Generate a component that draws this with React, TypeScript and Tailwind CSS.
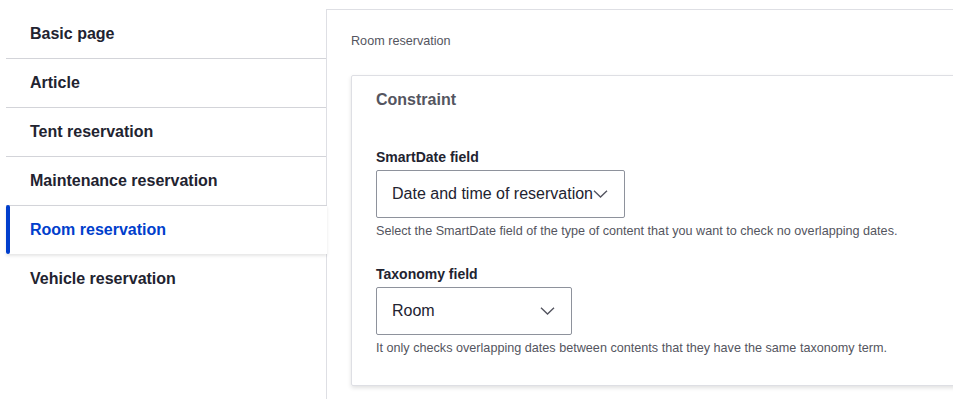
import { ReactNode } from 'react';


const tabs = [
    'Basic page',
    'Article',
    'Tent reservation',
    'Maintenance reservation',
    'Room reservation',
    'Vehicle reservation',
];


function Chevron() {
    return (
        <svg width="15" height="9" viewBox="0 0 15 9" fill="none" className="absolute right-[16px] top-1/2 -translate-y-1/2">
            <path d="M1 1.2l6.5 6.3 6.5-6.3" stroke="#545560" strokeWidth="1.4" />
        </svg>
    );
}


function SelectField({ label, value, width, help }: { label: string; value: string; width: string; help: ReactNode }) {
    return (
        <div>
            <div className="text-[14px] leading-[18px] font-bold text-[#222330]">{label}</div>
            <div className={`relative mt-[4px] h-[48px] ${width} rounded-[2px] border border-[#8e929c] bg-white flex items-center pl-[15px] text-[16px] text-[#222330] whitespace-nowrap overflow-hidden`}>
                {value}
                <Chevron />
            </div>
            <div className="mt-[5px] text-[12.64px] leading-[16px] text-[#545560]">{help}</div>
        </div>
    );
}


export default function App() {
    const active = 'Room reservation';

    return (
        <div className="h-[399px] w-[953px] overflow-hidden bg-white flex font-['Liberation_Sans',Arial,sans-serif]">

            {/* Vertical tabs menu */}
            <ul className="w-[326px] shrink-0 pl-[6px] pt-[10px] relative z-10">
                {tabs.map((t, i) => {
                    const isActive = t === active;
                    const last = i === tabs.length - 1;
                    return isActive ? (
                        <li
                            key={t}
                            className="relative h-[49px] mt-[-1px] mr-[-1px] bg-white border-t border-[#d3d4d9] pl-[24px] pb-[1px] flex items-center text-[16px] font-bold text-[#003ecc] shadow-[0_2px_3px_rgba(0,0,0,0.1)]"
                        >
                            {/* Active marker */}
                            <span className="absolute left-0 top-[-1px] bottom-0 w-[4px] rounded-[2px] bg-[#003ecc]" />
                            {t}
                        </li>
                    ) : (
                        <li
                            key={t}
                            className={`h-[49px] pl-[24px] flex items-center text-[16px] font-bold text-[#222330] ${last ? '' : 'border-b border-[#d3d4d9]'}`}
                        >
                            {t}
                        </li>
                    );
                })}
            </ul>

            {/* Tab pane */}
            <div className="mt-[9px] w-[680px] shrink-0 border-l border-t border-[#dedfe4] bg-white px-[24px] pt-[22px]">
                <div className="text-[12.64px] leading-[18px] text-[#545560]">Room reservation</div>

                <fieldset className="mt-[25px] border border-[#dedfe4] rounded-[2px] shadow-[0_2px_4px_rgba(0,0,0,0.12)] px-[24px] pt-[14px] pb-[29px]">
                    <div className="text-[16px] leading-[20px] font-bold text-[#545560]">Constraint</div>

                    <div className="mt-[38px]">
                        <SelectField
                            label="SmartDate field"
                            value="Date and time of reservation"
                            width="w-[249px]"
                            help="Select the SmartDate field of the type of content that you want to check no overlapping dates."
                        />
                    </div>

                    <div className="mt-[26px]">
                        <SelectField
                            label="Taxonomy field"
                            value="Room"
                            width="w-[196px]"
                            help="It only checks overlapping dates between contents that they have the same taxonomy term."
                        />
                    </div>
                </fieldset>
            </div>

        </div>
    );
}
